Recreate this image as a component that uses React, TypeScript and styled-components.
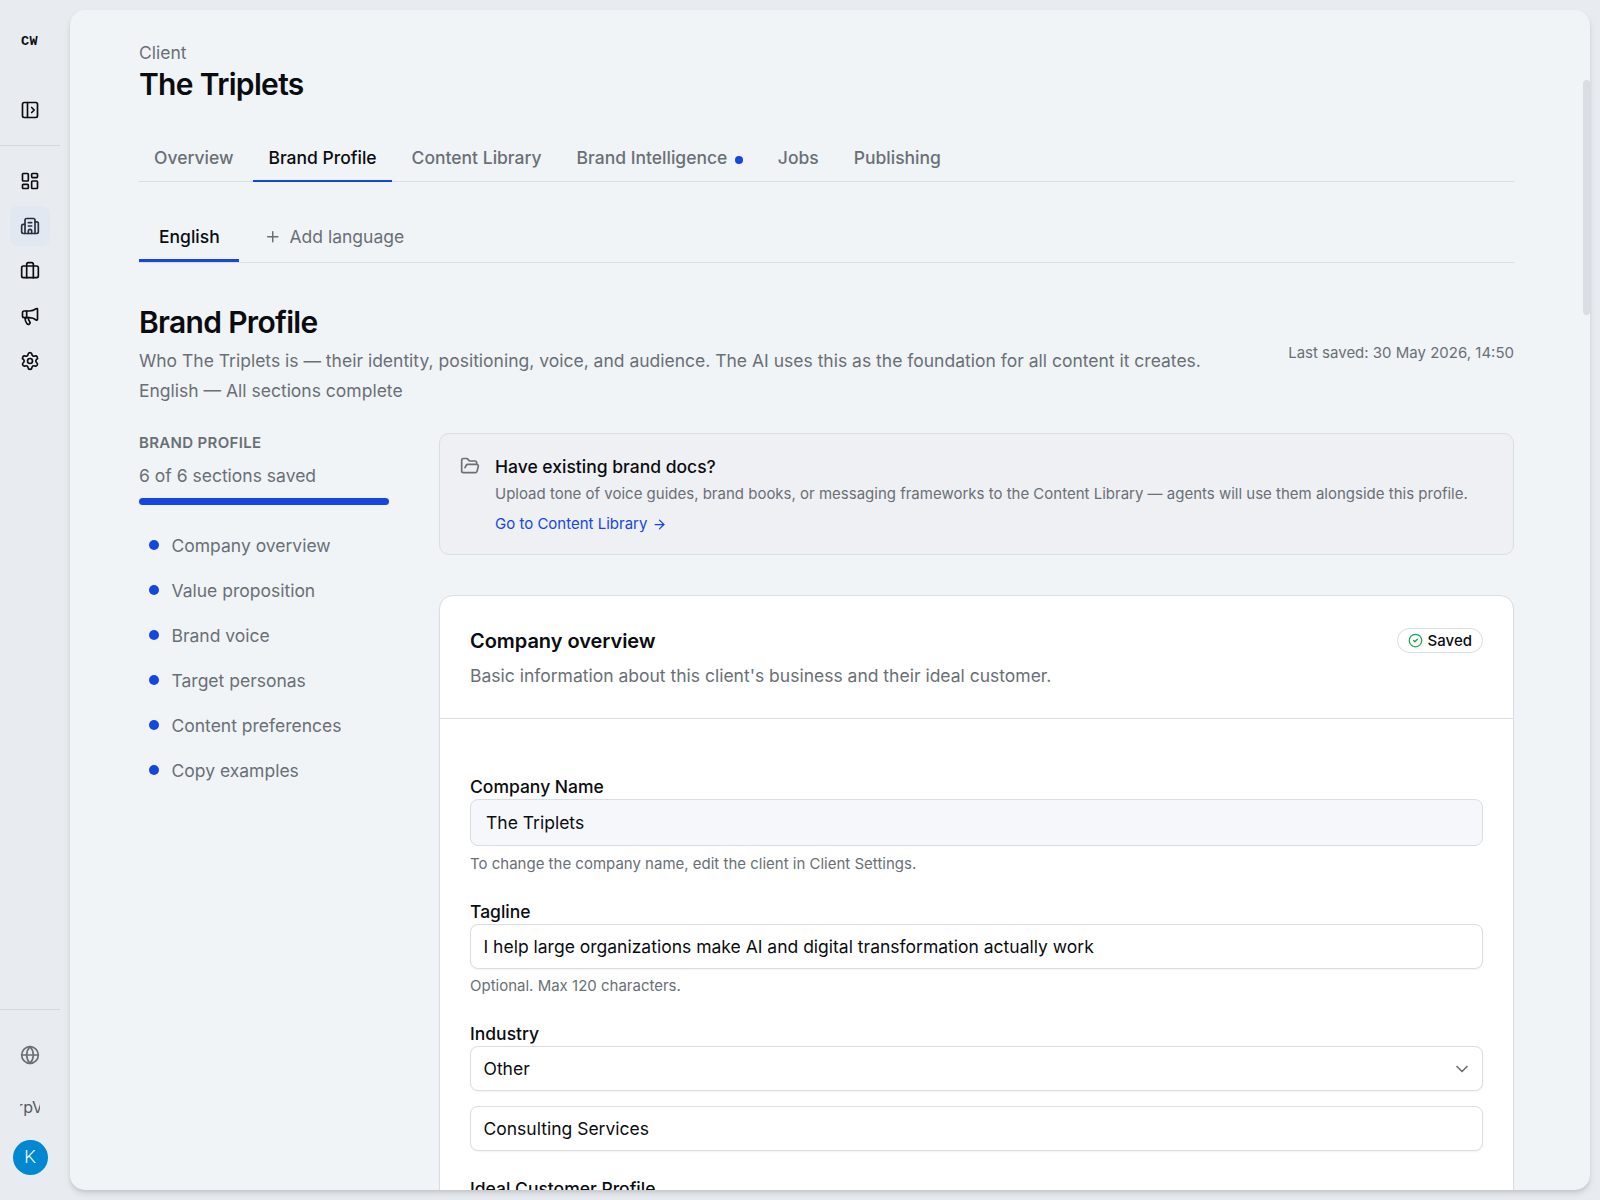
import styled, { createGlobalStyle } from 'styled-components';
import {
  ArrowRight,
  ChevronDown,
  CircleCheck,
  FolderOpen,
  Globe,
  LayoutDashboard,
  Megaphone,
  PanelLeftOpen,
  Plus,
  Settings,
} from 'lucide-react';

const colors = {
  shell: '#e8ebf0',
  page: '#f0f4f7',
  text: '#0a0c10',
  muted: '#6a6f76',
  border: '#d9dee4',
  primary: '#1447e0',
};

const TABS = [
  { label: 'Overview' },
  { label: 'Brand Profile', active: true },
  { label: 'Content Library' },
  { label: 'Brand Intelligence', dot: true },
  { label: 'Jobs' },
  { label: 'Publishing' },
];

const SECTIONS = [
  'Company overview',
  'Value proposition',
  'Brand voice',
  'Target personas',
  'Content preferences',
  'Copy examples',
];

function BuildingIcon() {
  return (
    <svg
      width="20"
      height="20"
      viewBox="0 0 24 24"
      fill="none"
      stroke="currentColor"
      strokeWidth="2"
      strokeLinecap="round"
      strokeLinejoin="round">
      <path d="M10 12h4" />
      <path d="M10 8h4" />
      <path d="M14 21v-3a2 2 0 0 0-4 0v3" />
      <path d="M6 10H4a2 2 0 0 0-2 2v7a2 2 0 0 0 2 2h16a2 2 0 0 0 2-2V9a2 2 0 0 0-2-2h-2" />
      <path d="M6 21V5a2 2 0 0 1 2-2h8a2 2 0 0 1 2 2v16" />
    </svg>
  );
}

function LuggageIcon() {
  return (
    <svg
      width="20"
      height="20"
      viewBox="0 0 24 24"
      fill="none"
      stroke="currentColor"
      strokeWidth="2"
      strokeLinecap="round"
      strokeLinejoin="round">
      <path d="M16 20V4a2 2 0 0 0-2-2h-4a2 2 0 0 0-2 2v16" />
      <rect width="20" height="14" x="2" y="6" rx="2" />
    </svg>
  );
}

function Sidebar() {
  return (
    <SidebarBlock>
      <SidebarTop>
        <Brand>CW</Brand>
        <PanelLeftOpen size={20} />
      </SidebarTop>
      <SidebarNav>
        <NavButton>
          <LayoutDashboard size={20} />
        </NavButton>
        <NavButton $active>
          <BuildingIcon />
        </NavButton>
        <NavButton>
          <LuggageIcon />
        </NavButton>
        <NavButton>
          <Megaphone size={20} />
        </NavButton>
        <NavButton>
          <Settings size={20} />
        </NavButton>
      </SidebarNav>
      <SidebarFooter>
        <Globe size={20} />
        <Version>
          <span>rpV</span>
        </Version>
        <Avatar>K</Avatar>
      </SidebarFooter>
    </SidebarBlock>
  );
}

function SectionNav() {
  return (
    <SectionNavBlock>
      <SectionNavTitle>Brand Profile</SectionNavTitle>
      <SectionCount>6 of 6 sections saved</SectionCount>
      <Progress />
      <SectionList>
        {SECTIONS.map(section => (
          <SectionItem key={section}>{section}</SectionItem>
        ))}
      </SectionList>
    </SectionNavBlock>
  );
}

function DocsNotice() {
  return (
    <Notice>
      <FolderOpen size={20} />
      <div>
        <NoticeTitle>Have existing brand docs?</NoticeTitle>
        <NoticeText>
          Upload tone of voice guides, brand books, or messaging frameworks to the Content Library — agents will use
          them alongside this profile.
        </NoticeText>
        <NoticeLink>
          Go to Content Library
          <ArrowRight size={15} />
        </NoticeLink>
      </div>
    </Notice>
  );
}

function OverviewCard() {
  return (
    <Card>
      <CardHeader>
        <div>
          <CardTitle>Company overview</CardTitle>
          <CardText>Basic information about this client's business and their ideal customer.</CardText>
        </div>
        <Badge>
          <CircleCheck size={15} />
          Saved
        </Badge>
      </CardHeader>
      <CardBody>
        <Field>
          <Label>Company Name</Label>
          <Control $readOnly>The Triplets</Control>
          <Hint>To change the company name, edit the client in Client Settings.</Hint>
        </Field>
        <Field>
          <Label>Tagline</Label>
          <Control>I help large organizations make AI and digital transformation actually work</Control>
          <Hint $tight>Optional. Max 120 characters.</Hint>
        </Field>
        <Field>
          <Label>Industry</Label>
          <Control>
            Other
            <ChevronDown size={20} />
          </Control>
          <ExtraControl>Consulting Services</ExtraControl>
        </Field>
        <Field>
          <Label>Ideal Customer Profile</Label>
        </Field>
      </CardBody>
    </Card>
  );
}

function App() {
  return (
    <Shell>
      <GlobalStyle />
      <Sidebar />
      <Panel>
        <Content>
          <Eyebrow>Client</Eyebrow>
          <Title>The Triplets</Title>
          <Tabs>
            {TABS.map(tab => (
              <Tab key={tab.label} $active={tab.active}>
                {tab.label}
                {tab.dot && <TabDot />}
              </Tab>
            ))}
          </Tabs>
          <LanguageTabs>
            <LanguageTab>English</LanguageTab>
            <AddLanguage>
              <Plus size={17.5} />
              Add language
            </AddLanguage>
          </LanguageTabs>
          <PageHeader>
            <div>
              <Title>Brand Profile</Title>
              <PageText>
                Who The Triplets is — their identity, positioning, voice, and audience. The AI uses this as the
                foundation for all content it creates.
                <br />
                English — All sections complete
              </PageText>
            </div>
            <LastSaved>Last saved: 30 May 2026, 14:50</LastSaved>
          </PageHeader>
          <Columns>
            <SectionNav />
            <div>
              <DocsNotice />
              <OverviewCard />
            </div>
          </Columns>
        </Content>
        <ScrollThumb />
      </Panel>
    </Shell>
  );
}

const GlobalStyle = createGlobalStyle`
  * {
    box-sizing: border-box;
    margin: 0;
    padding: 0;
  }
  body {
    background: ${colors.shell};
    color: ${colors.text};
    font-family: 'Inter', sans-serif;
    font-size: 17.5px;
    line-height: 25px;
    overflow: hidden;
  }
`;

const Shell = styled.div`
  display: flex;
  height: 1200px;
`;

const SidebarBlock = styled.aside`
  width: 60px;
  flex-shrink: 0;
  display: flex;
  flex-direction: column;
`;

const SidebarTop = styled.div`
  height: 146px;
  padding-top: 32px;
  border-bottom: 1px solid #d4d8de;
  display: flex;
  flex-direction: column;
  align-items: center;
  gap: 48px;
`;

const Brand = styled.div`
  margin-right: 1px;
  font-family: 'Liberation Mono', monospace;
  font-size: 13.5px;
  font-weight: 700;
  line-height: 20px;
  letter-spacing: 0.5px;
`;

const SidebarNav = styled.nav`
  flex: 1;
  padding-top: 15px;
  display: flex;
  flex-direction: column;
  align-items: center;
  gap: 5px;
`;

const NavButton = styled.div<{ $active?: boolean }>`
  width: 40px;
  height: 40px;
  border-radius: 8px;
  display: flex;
  align-items: center;
  justify-content: center;
  color: ${props => (props.$active ? '#273142' : colors.text)};
  background: ${props => (props.$active ? '#e1e8f1' : 'transparent')};
`;

const SidebarFooter = styled.div`
  height: 191px;
  padding-top: 35px;
  border-top: 1px solid #d4d8de;
  display: flex;
  flex-direction: column;
  align-items: center;
  color: ${colors.muted};
`;

const Version = styled.div`
  width: 20px;
  margin-top: 30px;
  overflow: hidden;
  display: flex;
  justify-content: center;
  font-size: 16px;
  line-height: 25px;
  color: #555a61;
`;

const Avatar = styled.div`
  width: 35px;
  height: 35px;
  margin: 20px 0 0 1px;
  padding-right: 1px;
  border-radius: 50%;
  background: #0288d1;
  color: #fff;
  font-family: Roboto, sans-serif;
  font-size: 18.5px;
  font-weight: 300;
  line-height: 35px;
  text-align: center;
`;

const Panel = styled.main`
  position: relative;
  flex: 1;
  height: 1180px;
  margin: 10px;
  padding: 30px 76px 0 69px;
  border-radius: 15px;
  background: ${colors.page};
  box-shadow: 0 4px 6px rgba(0, 0, 0, 0.1), 0 2px 3px rgba(0, 0, 0, 0.06);
  overflow: hidden;
`;

const ScrollThumb = styled.div`
  position: absolute;
  top: 70px;
  right: 0;
  width: 7px;
  height: 235px;
  border-radius: 4px;
  background: ${colors.border};
`;

const Content = styled.div`
  width: 1375px;
`;

const Eyebrow = styled.div`
  color: ${colors.muted};
`;

const Title = styled.h1`
  font-size: 30px;
  font-weight: 600;
  line-height: 38px;
  letter-spacing: -0.68px;
`;

const Tabs = styled.div`
  height: 47px;
  margin-top: 32px;
  border-bottom: 1px solid ${colors.border};
  display: flex;
  gap: 5px;
`;

const Tab = styled.div<{ $active?: boolean }>`
  height: 47px;
  padding: 10px 15px;
  display: flex;
  align-items: center;
  border-bottom: 2px solid ${props => (props.$active ? colors.primary : 'transparent')};
  color: ${props => (props.$active ? colors.text : colors.muted)};
  font-weight: 500;
`;

const TabDot = styled.span`
  width: 8px;
  height: 8px;
  margin: 4px 0 0 7.5px;
  border-radius: 50%;
  background: ${colors.primary};
`;

const LanguageTabs = styled.div`
  height: 51px;
  margin-top: 30px;
  border-bottom: 1px solid ${colors.border};
  display: flex;
`;

const LanguageTab = styled.div`
  width: 100px;
  height: 50px;
  padding: 12px 0 0 20px;
  border-bottom: 3px solid ${colors.primary};
  font-weight: 500;
`;

const AddLanguage = styled.div`
  padding: 12px 0 0 25px;
  height: 37px;
  display: flex;
  align-items: center;
  gap: 8px;
  color: ${colors.muted};
`;

const PageHeader = styled.header`
  margin-top: 40px;
  display: flex;
  align-items: center;
  justify-content: space-between;
`;

const PageText = styled.p`
  margin-top: 5px;
  line-height: 30px;
  color: ${colors.muted};
`;

const LastSaved = styled.div`
  margin-bottom: 3px;
  font-size: 15px;
  line-height: 20px;
  color: ${colors.muted};
`;

const Columns = styled.div`
  margin-top: 27px;
  display: grid;
  grid-template-columns: 250px 1075px;
  gap: 50px;
`;

const SectionNavBlock = styled.nav`
  color: ${colors.muted};
`;

const SectionNavTitle = styled.div`
  font-size: 15px;
  font-weight: 600;
  line-height: 20px;
  letter-spacing: 0.33px;
  text-transform: uppercase;
`;

const SectionCount = styled.div`
  margin-top: 10px;
`;

const Progress = styled.div`
  height: 7px;
  margin-top: 10px;
  border-radius: 4px;
  background: ${colors.primary};
`;

const SectionList = styled.ul`
  margin-top: 18px;
  list-style: none;
`;

const SectionItem = styled.li`
  height: 45px;
  padding-left: 10px;
  display: flex;
  align-items: center;
  gap: 12.5px;

  &::before {
    content: '';
    width: 10px;
    height: 10px;
    margin-top: -1px;
    border-radius: 50%;
    background: ${colors.primary};
  }
`;

const Notice = styled.section`
  height: 122px;
  padding: 20px;
  border: 1px solid ${colors.border};
  border-radius: 10px;
  background: #eff0f4;
  display: flex;
  gap: 15px;
  color: ${colors.muted};

  > svg {
    margin-top: 2px;
  }
`;

const NoticeTitle = styled.div`
  font-weight: 500;
  color: ${colors.text};
`;

const NoticeText = styled.p`
  margin-top: 5px;
  font-size: 15px;
  line-height: 20px;
  white-space: nowrap;
`;

const NoticeLink = styled.div`
  margin-top: 10px;
  display: flex;
  align-items: center;
  gap: 5px;
  font-size: 15px;
  line-height: 20px;
  color: ${colors.primary};
`;

const Card = styled.section`
  height: 800px;
  margin-top: 40px;
  border: 1px solid ${colors.border};
  border-radius: 14px;
  background: #fff;
  box-shadow: 0 1px 2px rgba(0, 0, 0, 0.05);
`;

const CardHeader = styled.header`
  height: 123px;
  padding: 30px;
  border-bottom: 1px solid ${colors.border};
  display: flex;
  align-items: flex-start;
  justify-content: space-between;
`;

const CardTitle = styled.h2`
  font-size: 20px;
  font-weight: 600;
  line-height: 30px;
  letter-spacing: -0.05px;
`;

const CardText = styled.p`
  margin-top: 7px;
  color: ${colors.muted};
`;

const Badge = styled.div`
  height: 25px;
  margin-top: 2px;
  padding: 0 10px;
  border: 1px solid ${colors.border};
  border-radius: 13px;
  display: flex;
  align-items: center;
  gap: 5px;
  font-size: 15px;
  font-weight: 500;

  svg {
    color: #16a34a;
  }
`;

const CardBody = styled.div`
  padding: 55px 30px 0;
`;

const Field = styled.div`
  margin-bottom: 25px;
`;

const Label = styled.div`
  font-weight: 500;
`;

const Control = styled.div<{ $readOnly?: boolean }>`
  height: ${props => (props.$readOnly ? '47px' : '45px')};
  padding: ${props => (props.$readOnly ? '0 15px' : '0 10px 0 12.5px')};
  border: 1px solid ${colors.border};
  border-radius: 8px;
  background: ${props => (props.$readOnly ? '#f6f7fb' : '#fff')};
  box-shadow: ${props => (props.$readOnly ? 'none' : '0 1px 2px rgba(0, 0, 0, 0.05)')};
  display: flex;
  align-items: center;
  justify-content: space-between;

  svg {
    color: ${colors.muted};
  }
`;

const ExtraControl = styled(Control)`
  margin-top: 15px;
`;

const Hint = styled.p<{ $tight?: boolean }>`
  margin-top: ${props => (props.$tight ? '7px' : '8px')};
  font-size: 15px;
  line-height: 20px;
  color: ${colors.muted};
`;

export default App;
